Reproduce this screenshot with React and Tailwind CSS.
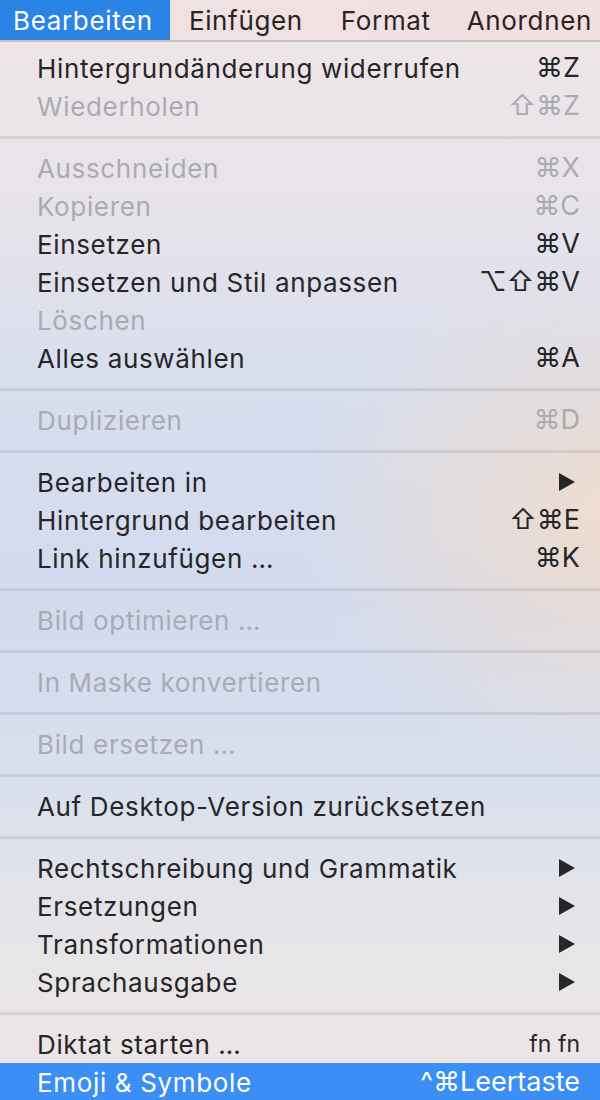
import React from 'react';

const font = { fontFamily: 'Inter, "Noto Sans", "DejaVu Sans", sans-serif' };

const groups = [
  [
    { label: 'Hintergrundänderung widerrufen', keys: '⌘Z' },
    { label: 'Wiederholen', keys: '⇧⌘Z', off: true },
  ],
  [
    { label: 'Ausschneiden', keys: '⌘X', off: true },
    { label: 'Kopieren', keys: '⌘C', off: true },
    { label: 'Einsetzen', keys: '⌘V' },
    { label: 'Einsetzen und Stil anpassen', keys: '⌥⇧⌘V' },
    { label: 'Löschen', off: true },
    { label: 'Alles auswählen', keys: '⌘A' },
  ],
  [{ label: 'Duplizieren', keys: '⌘D', off: true }],
  [
    { label: 'Bearbeiten in', sub: true },
    { label: 'Hintergrund bearbeiten', keys: '⇧⌘E' },
    { label: 'Link hinzufügen …', keys: '⌘K' },
  ],
  [{ label: 'Bild optimieren …', off: true }],
  [{ label: 'In Maske konvertieren', off: true }],
  [{ label: 'Bild ersetzen …', off: true }],
  [{ label: 'Auf Desktop-Version zurücksetzen' }],
  [
    { label: 'Rechtschreibung und Grammatik', sub: true },
    { label: 'Ersetzungen', sub: true },
    { label: 'Transformationen', sub: true },
    { label: 'Sprachausgabe', sub: true },
  ],
  [
    { label: 'Diktat starten …', keys: 'fn fn', small: true },
    { label: 'Emoji & Symbole', keys: '^⌘Leertaste', active: true },
  ],
];

function Arrow() {
  return (
    <svg width="18" height="20" viewBox="0 0 18 20" className="mr-[4px]">
      <path d="M1 1 L17 10 L1 19 Z" fill="currentColor" />
    </svg>
  );
}

function Item({ item }) {
  const color = item.active
    ? 'bg-[#3a8ef4] text-white'
    : item.off
      ? 'text-[#a9abb2]'
      : 'text-[#262628]';
  return (
    <div className={`h-[38px] flex items-center justify-between pl-[37px] pr-[20px] text-[26px] tracking-[0.025em] ${color}`}>
      <span className="whitespace-nowrap">{item.label}</span>
      {item.sub ? (
        <Arrow />
      ) : item.keys ? (
        <span className={`whitespace-nowrap tracking-normal ${item.small ? 'text-[23px]' : 'text-[27px]'}`}>{item.keys}</span>
      ) : null}
    </div>
  );
}

export default function App() {
  return (
    <div
      style={font}
      className="w-[600px] h-[1100px] overflow-hidden flex flex-col bg-[radial-gradient(ellipse_320px_260px_at_620px_520px,rgba(245,220,200,0.85),rgba(245,220,200,0)),linear-gradient(180deg,#efe6e7_0%,#e8e3ea_18%,#d7deee_35%,#d2dbee_55%,#d8dfee_70%,#e6e4e8_85%,#ede7e4_100%)]"
    >
      {/* menu bar */}
      <div className="h-[42px] shrink-0 flex items-center text-[26px] tracking-[0.025em] text-[#2b2323] bg-[linear-gradient(90deg,#eee2e3,#f2dfe0)] border-b-[2px] border-[#cbc3c4]">
        <div className="h-full flex items-center pl-[13px] pr-[17px] bg-[#2a84e6] text-white">Bearbeiten</div>
        <div className="pl-[19px]">Einfügen</div>
        <div className="pl-[38px]">Format</div>
        <div className="pl-[36px]">Anordnen</div>
      </div>

      <div className="pt-[7px] flex flex-col">
        {groups.map((g, i) => (
          <div key={i}>
            {i > 0 && (
              <div className="h-[24px] flex items-center">
                <div className="w-full h-[3px] bg-[#000]/[0.08]" />
              </div>
            )}
            {g.map((item, j) => (
              <Item key={j} item={item} />
            ))}
          </div>
        ))}
      </div>
    </div>
  );
}
